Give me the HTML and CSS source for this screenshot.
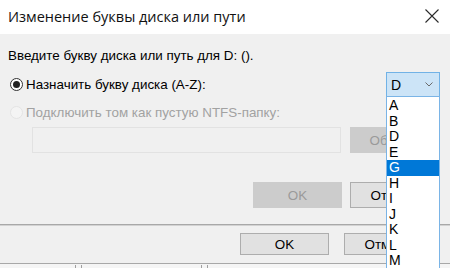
FILE: index.html
```html
<!DOCTYPE html>
<html lang="ru">
<head>
<meta charset="utf-8">
<title>Изменение буквы диска или пути</title>
<link rel="stylesheet" href="styles.css">
</head>
<body>
<div class="stage">
  <div class="front">
    <div class="titlebar">
      <span class="title">Изменение буквы диска или пути</span>
      <svg class="close" width="14" height="14" viewBox="0 0 14 14"><path d="M0.5 0.5 L13.5 13.5 M13.5 0.5 L0.5 13.5" stroke="#2b2b2b" stroke-width="1.1" fill="none"/></svg>
    </div>
    <div class="content">
      <div class="prompt">Введите букву диска или путь для D: ().</div>
      <div class="row row1">
        <span class="radio checked"><span class="dot"></span></span>
        <span class="label">Назначить букву диска (A-Z):</span>
        <div class="combo"><span>D</span>
          <svg class="chev" width="8" height="5" viewBox="0 0 8 5"><path d="M0.5 0.5 L4 4 L7.5 0.5" stroke="#6a6a6a" stroke-width="1" fill="none"/></svg>
        </div>
      </div>
      <div class="row row2">
        <span class="radio disabled"></span>
        <span class="label dis">Подключить том как пустую NTFS-папку:</span>
      </div>
      <div class="row row3">
        <div class="field"></div>
        <div class="btn dis">Обзор...</div>
      </div>
      <div class="row row4">
        <div class="btn dis">OK</div>
        <div class="btn">Отмена</div>
      </div>
    </div>
  </div>
  <div class="back">
    <div class="btn">OK</div>
    <div class="btn">Отмена</div>
  </div>
  <div class="listhead">
    <span class="sep s1"></span>
    <span class="sep s2"></span>
  </div>
  <ul class="droplist">
    <li>A</li><li>B</li><li>D</li><li>E</li><li class="sel">G</li><li>H</li><li>I</li><li>J</li><li>K</li><li>L</li><li>M</li>
  </ul>
</div>
</body>
</html>
```
FILE: styles.css
```css
* { box-sizing: border-box; }
html, body { margin: 0; padding: 0; }
body {
  width: 450px;
  height: 268px;
  overflow: hidden;
  background: #f0f0f0;
  font-family: "Liberation Sans", Arial, sans-serif;
  font-size: 13.4px;
  color: #000;
}
.stage { position: relative; width: 450px; height: 268px; overflow: hidden; }
.front {
  height: 225px;
  background: #f0f0f0;
  border-bottom: 1px solid #a8a8a8;
  box-shadow: 0 1px 0 #d2d2d2;
}
.titlebar {
  height: 34px;
  background: #fff;
  display: flex;
  align-items: center;
  justify-content: space-between;
  padding: 0 11px 0 8px;
}
.title { font-family: "Open Sans", "Noto Sans", sans-serif; font-size: 14.5px; color: #111; margin-top: -1px; }
.close { display: block; margin-top: -2px; }
.content { padding: 14px 0 0 8px; }
.prompt { height: 16px; line-height: 16px; }
.row { display: flex; align-items: center; }
.row1 { margin-top: 8px; height: 25px; }
.radio {
  width: 13px; height: 13px; border-radius: 50%;
  border: 1px solid #333;
  background: #fff;
  margin-left: 2px;
  display: flex; align-items: center; justify-content: center;
  flex: none;
}
.radio .dot { width: 7px; height: 7px; border-radius: 50%; background: #222; }
.radio.disabled { border-color: #e4e4e4; background: #f4f4f4; }
.label { margin-left: 3px; }
.label.dis { color: #a2a2a2; }
.combo {
  margin-left: auto;
  margin-right: 10px;
  width: 54px; height: 25px;
  background: #cce4f7;
  border: 1px solid #71b2e6;
  display: flex; align-items: center; justify-content: space-between;
  padding: 0 6px 0 4px;
}
.combo span { font-size: 14px; }
.row2 { margin-top: 7px; height: 16px; }
.row3 { margin-top: 7px; height: 26px; padding-left: 24px; }
.field { width: 309px; height: 26px; border: 1px solid #e2e2e2; background: #f0f0f0; }
.btn {
  width: 89px; height: 26px;
  background: #e1e1e1;
  border: 1px solid #adadad;
  display: flex; align-items: center; justify-content: center;
  flex: none;
}
.btn.dis { background: #cccccc; border-color: #cccccc; color: #9a9a9a; }
.row3 .btn { margin-left: 9px; }
.row4 { margin-top: 29px; height: 26px; padding-left: 245px; gap: 8px; }
.back { height: 39px; display: flex; align-items: center; padding-left: 240px; gap: 15px; border-bottom: 1px solid #a8a8a8; }
.back .btn { height: 22px; }
.listhead { position: relative; height: 4px; background: #f5f5f5; }
.sep { position: absolute; top: 1px; width: 7px; height: 5px; border-left: 1px solid #a0a0a0; border-right: 1px solid #a0a0a0; }
.s1 { left: 75px; }
.s2 { left: 201px; }
.droplist {
  position: absolute;
  left: 386px; top: 96px;
  width: 54px; height: 190px;
  margin: 0; padding: 1px 0 0 0;
  list-style: none;
  background: #fff;
  border: 1px solid #7ab4e6;
}
.droplist li { height: 15.5px; line-height: 15.5px; padding-left: 2px; font-size: 14px; }
.droplist li.sel { background: #0078d7; color: #fff; }
```
